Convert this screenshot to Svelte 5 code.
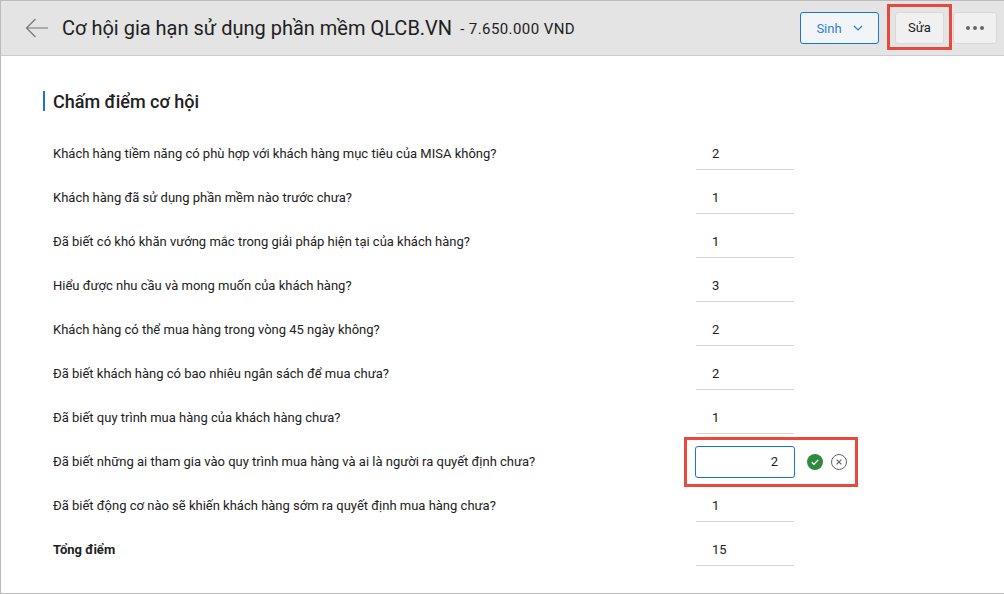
<script>
  const rows = [
    { label: 'Khách hàng tiềm năng có phù hợp với khách hàng mục tiêu của MISA không?', value: 2 },
    { label: 'Khách hàng đã sử dụng phần mềm nào trước chưa?', value: 1 },
    { label: 'Đã biết có khó khăn vướng mắc trong giải pháp hiện tại của khách hàng?', value: 1 },
    { label: 'Hiểu được nhu cầu và mong muốn của khách hàng?', value: 3 },
    { label: 'Khách hàng có thể mua hàng trong vòng 45 ngày không?', value: 2 },
    { label: 'Đã biết khách hàng có bao nhiêu ngân sách để mua chưa?', value: 2 },
    { label: 'Đã biết quy trình mua hàng của khách hàng chưa?', value: 1 },
    { label: 'Đã biết những ai tham gia vào quy trình mua hàng và ai là người ra quyết định chưa?', value: 2, editing: true },
    { label: 'Đã biết động cơ nào sẽ khiến khách hàng sớm ra quyết định mua hàng chưa?', value: 1 },
    { label: 'Tổng điểm', value: 15, total: true },
  ];
</script>

<div class="page">
  <header class="topbar">
    <svg class="back" width="24" height="20" viewBox="0 0 24 20" fill="none" stroke="#777" stroke-width="1.2">
      <path d="M23 10H1.5M10.5 1L1.5 10l9 9" />
    </svg>
    <h1>Cơ hội gia hạn sử dụng phần mềm QLCB.VN</h1>
    <span class="amount">- 7.650.000 VND</span>
    <div class="actions">
      <button class="btn btn-sinh" type="button">
        Sinh
        <svg width="10" height="6" viewBox="0 0 10 6" fill="none" stroke="#2f7fdb" stroke-width="1.2">
          <path d="M1 1l4 4 4-4" />
        </svg>
      </button>
      <span class="edit-wrap">
        <button class="btn btn-edit" type="button">Sửa</button>
        <span class="highlight"></span>
      </span>
      <button class="btn btn-more" type="button" aria-label="Thêm">
        <i></i><i></i><i></i>
      </button>
    </div>
  </header>

  <main class="content">
    <h2>Chấm điểm cơ hội</h2>
    <div class="rows">
      {#each rows as row}
        <div class="row" class:total={row.total}>
          <span class="label">{row.label}</span>
          {#if row.editing}
            <div class="edit-cell">
              <div class="input">{row.value}</div>
              <svg class="icon" width="16" height="16" viewBox="0 0 16 16">
                <circle cx="8" cy="8" r="8" fill="#2e8b3d" />
                <path d="M4.8 8.2l2.2 2.1 4.2-4.4" fill="none" stroke="#fff" stroke-width="1.3" />
              </svg>
              <svg class="icon" width="16" height="16" viewBox="0 0 16 16" fill="none" stroke="#666">
                <circle cx="8" cy="8" r="7.5" />
                <path d="M5.6 5.6l4.8 4.8M10.4 5.6l-4.8 4.8" stroke-width="1.2" />
              </svg>
              <span class="highlight"></span>
            </div>
          {:else}
            <div class="value">{row.value}</div>
          {/if}
        </div>
      {/each}
    </div>
  </main>
</div>

<style>
  :global(body) {
    margin: 0;
    background: #fff;
  }

  .page {
    width: 1004px;
    height: 594px;
    box-sizing: border-box;
    border: 1px solid #bbb;
    border-right: 0;
    font-family: Roboto, 'Liberation Sans', sans-serif;
    color: #212121;
    overflow: hidden;
  }

  .topbar {
    height: 55px;
    box-sizing: border-box;
    display: flex;
    align-items: center;
    padding: 0 0 0 24px;
    background: #e4e4e4;
    border-bottom: 1px solid #ccc;
  }

  .back {
    margin-right: 13px;
  }

  h1 {
    margin: 0;
    font-size: 20px;
    font-weight: 400;
    white-space: nowrap;
  }

  .amount {
    margin-left: 8px;
    margin-top: 2px;
    font-size: 15px;
    letter-spacing: 0.42px;
  }

  .actions {
    margin-left: auto;
    display: flex;
    align-items: center;
    padding-right: 7px;
  }

  .btn {
    height: 32px;
    box-sizing: border-box;
    border-radius: 3px;
    font-family: inherit;
    font-size: 13px;
    background: #f0f0f0;
    border: 1px solid #d9d9d9;
    padding: 0;
    color: #212121;
  }

  .btn-sinh {
    width: 79px;
    display: flex;
    align-items: center;
    justify-content: center;
    gap: 11px;
    color: #2f7fdb;
    background: #f2f5f8;
    border-color: #1a73d9;
    margin-right: 16px;
  }

  .edit-wrap {
    position: relative;
    display: block;
    margin-right: 9px;
  }

  .btn-edit {
    display: block;
    width: 49px;
    padding-bottom: 2px;
  }

  .edit-wrap .highlight {
    position: absolute;
    left: -8px;
    top: -8px;
    width: 65px;
    height: 46px;
  }

  .btn-more {
    width: 44px;
    display: flex;
    align-items: center;
    justify-content: center;
    gap: 3px;
  }

  .btn-more i {
    width: 4px;
    height: 4px;
    border-radius: 50%;
    background: #666;
  }

  .highlight {
    box-sizing: border-box;
    border: 3px solid #e8493f;
    pointer-events: none;
  }

  .content {
    padding: 35px 0 0 42px;
  }

  h2 {
    margin: 0;
    height: 20px;
    line-height: 21px;
    padding-left: 8px;
    border-left: 2px solid #1a73d9;
    font-size: 18px;
    font-weight: 500;
  }

  .rows {
    margin-top: 20px;
  }

  .row {
    height: 44px;
    display: flex;
    align-items: center;
    padding-left: 10px;
    font-size: 13px;
  }

  .label {
    width: 643px;
    flex: none;
  }

  .total .label {
    font-weight: 700;
  }

  .value {
    align-self: flex-start;
    width: 98px;
    height: 33px;
    margin-top: 6px;
    box-sizing: border-box;
    line-height: 33px;
    padding: 0 0 0 16px;
    border-bottom: 1px solid #d4d4d4;
  }

  .edit-cell {
    position: relative;
    align-self: flex-start;
    margin-left: -1px;
    margin-top: 7px;
    display: flex;
    align-items: center;
    gap: 8px;
  }

  .input {
    width: 100px;
    height: 32px;
    box-sizing: border-box;
    margin-right: 4px;
    border: 1px solid #1a73d9;
    border-radius: 3px;
    line-height: 30px;
    text-align: right;
    padding-right: 16px;
    font-size: 13px;
  }

  .icon {
    flex: none;
  }

  .edit-cell .highlight {
    position: absolute;
    left: -11px;
    top: -9px;
    width: 174px;
    height: 50px;
  }
</style>
